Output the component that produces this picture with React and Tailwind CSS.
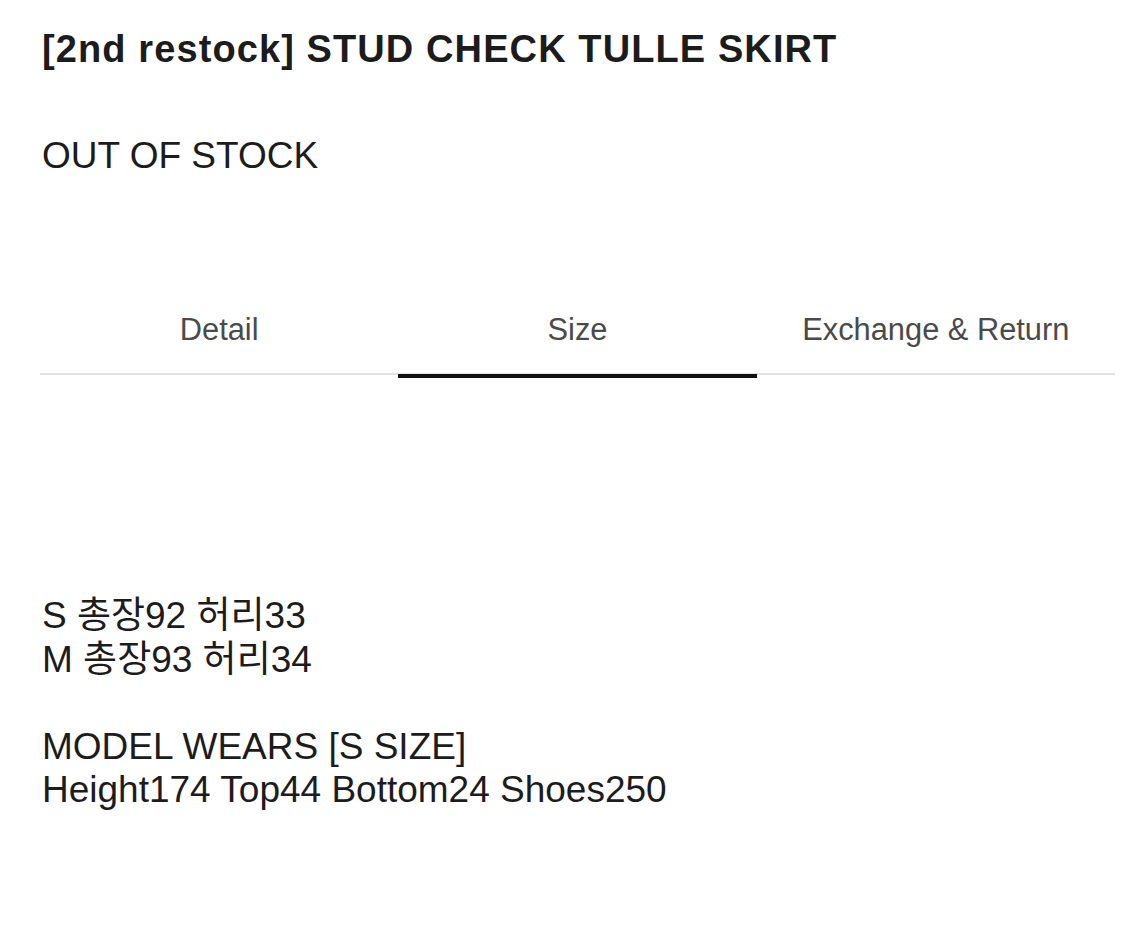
export default function App() {
  const font = { fontFamily: '"Liberation Sans", Arial, "Noto Sans CJK KR", sans-serif' };
  return (
    <div className="w-[1125px] h-[940px] bg-white text-[#1c1c1c] pl-[40px] pr-[10px]" style={font}>
      <h1 className="pt-[27px] pl-[2px] text-[38px] leading-[44px] font-bold tracking-[1.1px]">[2nd restock] STUD CHECK TULLE SKIRT</h1>
      <p className="mt-[64px] pl-[2px] text-[37px] leading-[41px]">OUT OF STOCK</p>
      <div className="mt-[134px] grid grid-cols-3 border-b-2 border-[#e2e2e2]">
        {["Detail", "Size", "Exchange & Return"].map((t, i) => (
          <div key={t} className="relative h-[63px] pt-[2px] flex justify-center text-[#4a4a4a] text-[30.8px] leading-[36px]">
            {t}
            {i === 1 && <div className="absolute left-0 right-0 bottom-[-5px] h-[4px] bg-[#111]" />}
          </div>
        ))}
      </div>
      <div className="mt-[219px] pl-[2px] text-[37px] leading-[43.5px]">
        <p>S 총장92 허리33</p>
        <p>M 총장93 허리34</p>
        <p>&nbsp;</p>
        <p>MODEL WEARS [S SIZE]</p>
        <p>Height174 Top44 Bottom24 Shoes250</p>
      </div>
    </div>
  );
}
